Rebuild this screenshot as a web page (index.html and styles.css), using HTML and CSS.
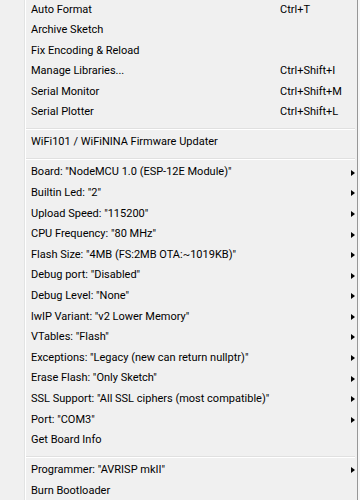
FILE: index.html
```html
<!DOCTYPE html>
<html>
<head>
    <title>Tools menu</title>
    <link rel="stylesheet" href="styles.css">
</head>
<body>
    <div class="menu">
        <div class="item"><span class="label">Auto Format</span><span class="key">Ctrl+T</span></div>
        <div class="item"><span class="label">Archive Sketch</span></div>
        <div class="item"><span class="label">Fix Encoding &amp; Reload</span></div>
        <div class="item"><span class="label">Manage Libraries...</span><span class="key">Ctrl+Shift+I</span></div>
        <div class="item"><span class="label">Serial Monitor</span><span class="key">Ctrl+Shift+M</span></div>
        <div class="item"><span class="label">Serial Plotter</span><span class="key">Ctrl+Shift+L</span></div>
        <div class="sep"></div>
        <div class="item"><span class="label">WiFi101 / WiFiNINA Firmware Updater</span></div>
        <div class="sep"></div>
        <div class="item"><span class="label">Board: "NodeMCU 1.0 (ESP-12E Module)"</span><span class="arrow"></span></div>
        <div class="item"><span class="label">Builtin Led: "2"</span><span class="arrow"></span></div>
        <div class="item"><span class="label">Upload Speed: "115200"</span><span class="arrow"></span></div>
        <div class="item"><span class="label">CPU Frequency: "80 MHz"</span><span class="arrow"></span></div>
        <div class="item"><span class="label">Flash Size: "4MB (FS:2MB OTA:~1019KB)"</span><span class="arrow"></span></div>
        <div class="item"><span class="label">Debug port: "Disabled"</span><span class="arrow"></span></div>
        <div class="item"><span class="label">Debug Level: "None"</span><span class="arrow"></span></div>
        <div class="item"><span class="label">lwIP Variant: "v2 Lower Memory"</span><span class="arrow"></span></div>
        <div class="item"><span class="label">VTables: "Flash"</span><span class="arrow"></span></div>
        <div class="item"><span class="label">Exceptions: "Legacy (new can return nullptr)"</span><span class="arrow"></span></div>
        <div class="item"><span class="label">Erase Flash: "Only Sketch"</span><span class="arrow"></span></div>
        <div class="item"><span class="label">SSL Support: "All SSL ciphers (most compatible)"</span><span class="arrow"></span></div>
        <div class="item"><span class="label">Port: "COM3"</span><span class="arrow"></span></div>
        <div class="item"><span class="label">Get Board Info</span></div>
        <div class="sep"></div>
        <div class="item"><span class="label">Programmer: "AVRISP mkII"</span><span class="arrow"></span></div>
        <div class="item"><span class="label">Burn Bootloader</span></div>
    </div>
</body>
</html>
```

FILE: styles.css
```css
body {
    margin: 0;
    background: #f7f7f7;
    font-family: Roboto, 'Noto Sans', sans-serif;
    font-size: 11px;
    color: #000;
    overflow: hidden;
}

.menu {
    width: 357px;
    height: 500px;
    margin-top: -0.5px;
    background: #f0f0f0 linear-gradient(to right, transparent 24px, #e2e3e3 24px, #e2e3e3 25px, #fff 25px, #fff 26px, transparent 26px);
    border-right: 1px solid #979797;
}

.item {
    display: grid;
    grid-template-columns: 249px 72px 1fr;
    align-items: center;
    height: 20.6px;
    line-height: 20.6px;
    padding-left: 31px;
    white-space: nowrap;
}

.label {
    grid-column: 1 / 3;
    grid-row: 1;
}

.key {
    grid-column: 2;
    grid-row: 1;
}

.arrow {
    grid-column: 3;
    grid-row: 1;
    justify-self: start;
    width: 0;
    height: 0;
    margin-left: -1px;
    border-left: 4px solid #000;
    border-top: 3.5px solid transparent;
    border-bottom: 3.5px solid transparent;
}

.sep {
    height: 9.4px;
    margin-left: 26px;
    margin-right: 2px;
    background: linear-gradient(to bottom, transparent 5px, #e0e0e0 5px, #e0e0e0 6px, #fff 6px, #fff 7px, transparent 7px);
}
```
